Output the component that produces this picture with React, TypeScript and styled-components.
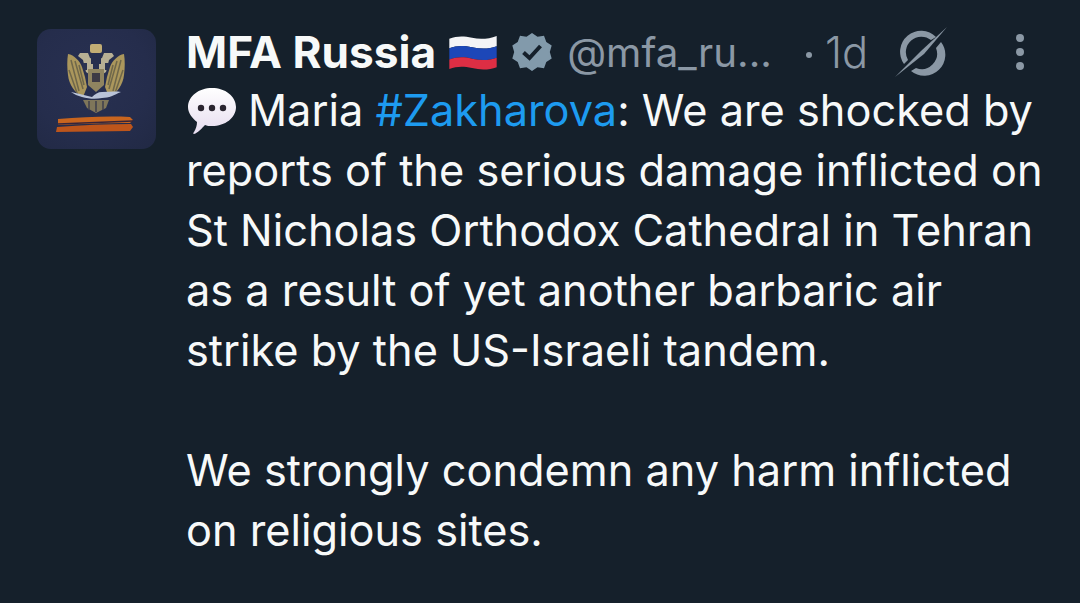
import React from "react";
import styled, { createGlobalStyle } from "styled-components";

const Global = createGlobalStyle`
  html, body { margin: 0; padding: 0; background: #15202b; }
  body { width: 1080px; height: 603px; overflow: hidden; }
`;

const Tweet = styled.main`
  width: 1080px;
  height: 603px;
  box-sizing: border-box;
  padding: 29px 0 0 37px;
  display: flex;
  gap: 30px;
  background: #15202b;
  font-family: Inter, "Liberation Sans", sans-serif;
  color: #f7f9f9;
`;

const Avatar = styled.div`
  flex: none;
  width: 119px;
  height: 120px;
  border-radius: 14px;
  overflow: hidden;
  background: radial-gradient(circle at 45% 40%, #283051 0%, #252d4c 60%, #212944 100%);
  svg { display: block; filter: blur(0.5px); }
`;

const Main = styled.div`
  flex: 1;
  min-width: 0;
`;

const Header = styled.header`
  height: 52px;
  display: flex;
  align-items: center;
  white-space: nowrap;
  margin-top: -3px;
  margin-bottom: 2px;
`;

const Name = styled.span`
  font-size: 44.2px;
  font-weight: 700;
`;

const Flag = styled.svg`
  width: 50px;
  height: 36px;
  margin-left: 12px;
  flex: none;
`;

const Badge = styled.svg`
  width: 40px;
  height: 40px;
  margin-left: 14px;
  flex: none;
`;

const Handle = styled.span`
  font-size: 40.3px;
  color: #8b98a5;
  margin-left: 15px;
`;

const Dot = styled.i`
  width: 6px;
  height: 6px;
  border-radius: 50%;
  background: #8b98a5;
  margin-left: 34px;
  margin-top: 6px;
  flex: none;
`;

const Age = styled.span`
  font-size: 43.5px;
  font-weight: 300;
  color: #8b98a5;
  margin-left: 13px;
`;

const Grok = styled.svg`
  width: 52px;
  height: 50px;
  margin-left: 27px;
  flex: none;
`;

const More = styled.svg`
  width: 10px;
  height: 38px;
  margin-left: 68px;
  flex: none;
`;

const Body = styled.div`
  font-size: 43.3px;
  line-height: 60px;
  white-space: pre;
`;

const Tag = styled.span`
  color: #1d9bf0;
`;

const Bubble = styled.svg`
  width: 50px;
  height: 48px;
  vertical-align: -9px;
  margin-left: 1px;
  margin-right: 11px;
`;

const wing = (
  <>
    <path d="M31 25c6 1 12 7 14 13l3 10 2 10-4 10c-8-4-14-12-15-22-1-7-1-15 0-21z" fill="#ab975c" />
    <path d="M34 31l8 31M38 32l8 28M32 41l8 23M42 36l5 20" stroke="#6f674a" strokeWidth="1.500" fill="none" />
    <path d="M43 24h8l2 5 3 1v10l-4 5-3-2-3-12-5-4z" fill="#b8b094" />
    <rect x="46" y="34" width="4" height="7" fill="#2b3351" />
  </>
);

export default function App() {
  return (
    <>
      <Global />
      <Tweet>
        <Avatar>
          <svg width="119" height="120" viewBox="0 0 119 120">
            <rect x="53" y="15" width="12" height="9" rx="2" fill="#c2ad74" />
            <g>{wing}</g>
            <g transform="translate(118 0) scale(-1 1)">{wing}</g>
            <rect x="54" y="26" width="10" height="9" fill="#262e4e" />
            <path d="M51 40h16v16l-8 7-8-7z" fill="#8f8460" />
            <rect x="55" y="44" width="8" height="9" fill="#3d3a45" />
            <path d="M34 63c8 2 14 3 21 5 3-3 6-5 10-5 6 0 13-1 19 0-7 3-12 6-19 6-9 2-23 0-31-6z" fill="#b9c3d8" />
            <path d="M46 71h26l-3 8-10 5-9-5z" fill="#7f765a" />
            <path d="M52 72v9M59 72v11M66 72v9" stroke="#3f3f4c" strokeWidth="1.500" />
            <path d="M21 90c25-2 50-3 72-2l3 3-3 3c-25 0-50 1-72 2z" fill="#c9651e" />
            <path d="M20 98c25-2 50-3 74-3l2 3-3 4c-25 0-50 1-74 1z" fill="#bd551b" />
            <path d="M21 95c25-1 50-2 75-3" stroke="#36243a" strokeWidth="1.500" fill="none" />
          </svg>
        </Avatar>
        <Main>
          <Header>
            <Name>MFA Russia</Name>
            <Flag viewBox="0 0 52 38">
              <path d="M1 5c8-3 15-3 24-1 9 2 18 1 26-2v11c-8 3-17 3-26 1-9-2-16-2-24 1z" fill="#f4f4f6" />
              <path d="M1 15c8-3 15-3 24-1 9 2 18 2 26-1v12c-8 3-17 3-26 1-9-2-16-2-24 1z" fill="#1c47b8" />
              <path d="M1 27c8-3 15-3 24-1 9 2 18 2 26-1v10c-8 3-17 3-26 1-9-2-16-2-24 1z" fill="#dd2e44" />
            </Flag>
            <Badge viewBox="0 0 40 40">
              <path
                d="M20 1l5.500 3.700 6.500-.9 2.300 6.100 5.400 3.700-1.900 6.400 1.900 6.400-5.400 3.700-2.300 6.100-6.500-.9L20 39l-5.500-3.700-6.500.9-2.300-6.100L.3 26.400 2.200 20 .3 13.600l5.400-3.700L8 3.800l6.500.9z"
                fill="#829aab"
              />
              <path d="M11.500 20.500l6 5.500 11-12" fill="none" stroke="#15202b" strokeWidth="4" />
            </Badge>
            <Handle>@mfa_ru...</Handle>
            <Dot />
            <Age>1d</Age>
            <Grok viewBox="0 0 52 50">
              <path d="M41 10A21 21 0 0 0 9 37l4-4A15.500 15.500 0 0 1 36 13z" fill="#8b98a5" />
              <path d="M46 15A21 21 0 0 1 16 44l5-3A15.500 15.500 0 0 0 41 21z" fill="#8b98a5" />
              <path d="M52 0L26 24 0 50 29 27z" fill="#8b98a5" />
            </Grok>
            <More viewBox="0 0 10 38">
              <circle cx="5" cy="5" r="4" fill="#8b98a5" />
              <circle cx="5" cy="19" r="4" fill="#8b98a5" />
              <circle cx="5" cy="33" r="4" fill="#8b98a5" />
            </More>
          </Header>
          <Body>
            <Bubble viewBox="0 0 50 48">
              <defs>
                <linearGradient id="b" x1="0" y1="0" x2="0" y2="1">
                  <stop offset="0" stopColor="#ffffff" />
                  <stop offset="1" stopColor="#e6dcef" />
                </linearGradient>
              </defs>
              <path d="M25 1c13 0 24 8 24 19s-11 19-24 19c-3 0-5 0-7-1-3 3-7 8-11 9-1 0-1-1 0-2 2-3 3-7 3-10C5 31 1 26 1 20 1 9 12 1 25 1z" fill="url(#b)" />
              <circle cx="14" cy="21" r="3.200" fill="#2a2530" />
              <circle cx="25" cy="21" r="3.200" fill="#2a2530" />
              <circle cx="36" cy="21" r="3.200" fill="#2a2530" />
            </Bubble>
            Maria <Tag>#Zakharova</Tag>: We are shocked by{"\n"}
            reports of the serious damage inflicted on{"\n"}
            St Nicholas Orthodox Cathedral in Tehran{"\n"}
            as a result of yet another barbaric air{"\n"}
            strike by the US-Israeli tandem.{"\n"}
            {"\n"}
            We strongly condemn any harm inflicted{"\n"}
            on religious sites.
          </Body>
        </Main>
      </Tweet>
    </>
  );
}
